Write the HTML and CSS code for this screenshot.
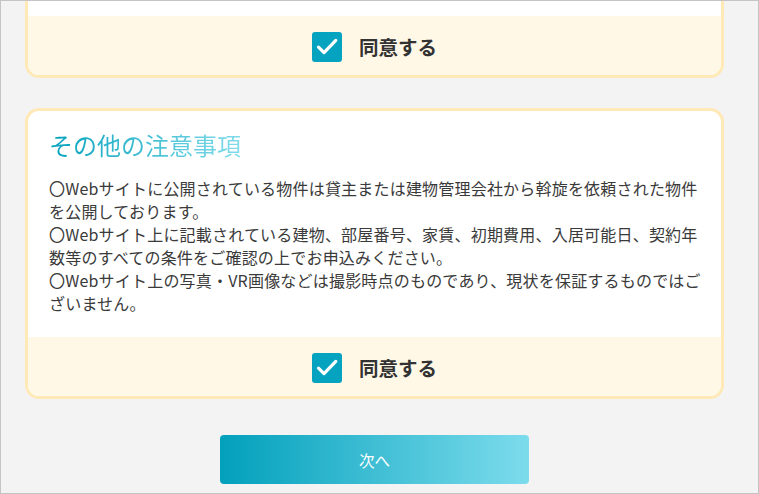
FILE: index.html
```html
<!DOCTYPE html>
<html lang="ja">

<head>
    <meta charset="UTF-8">
    <meta name="viewport" content="width=device-width, initial-scale=1.0">
    <title>注意事項の確認</title>
    <link rel="stylesheet" href="styles.css">
</head>

<body>

    <div class="frame">
        <div class="content">

            <section class="card card-first">
                <div class="card-body card-body-cut"></div>
                <label class="agree">
                    <span class="check">
                        <svg width="30" height="30" viewBox="0 0 30 30">
                            <rect width="30" height="30" rx="3" fill="#05a3bf" />
                            <path d="M6.5 15.2 L12 20.6 L23.8 8.4" fill="none" stroke="#fff" stroke-width="3.2" stroke-linecap="round" stroke-linejoin="round" />
                        </svg>
                    </span>
                    <span class="agree-text">同意する</span>
                </label>
            </section>

            <section class="card">
                <div class="card-body">
                    <h2 class="card-title"><span>その他の注意事項</span></h2>
                    <p class="notes">〇Webサイトに公開されている物件は貸主または建物管理会社から斡旋を依頼された物件を公開しております。<br>〇Webサイト上に記載されている建物、部屋番号、家賃、初期費用、入居可能日、契約年数等のすべての条件をご確認の上でお申込みください。<br>〇Webサイト上の写真・VR画像などは撮影時点のものであり、現状を保証するものではございません。</p>
                </div>
                <label class="agree">
                    <span class="check">
                        <svg width="30" height="30" viewBox="0 0 30 30">
                            <rect width="30" height="30" rx="3" fill="#05a3bf" />
                            <path d="M6.5 15.2 L12 20.6 L23.8 8.4" fill="none" stroke="#fff" stroke-width="3.2" stroke-linecap="round" stroke-linejoin="round" />
                        </svg>
                    </span>
                    <span class="agree-text">同意する</span>
                </label>
            </section>

            <div class="actions">
                <button class="next" type="button">次へ</button>
            </div>

        </div>
    </div>

</body>

</html>
```

FILE: styles.css
```css
body {
    margin: 0;
    font-family: "Noto Sans CJK JP", "Noto Sans", sans-serif;
    color: #333333;
}

.frame {
    width: 759px;
    height: 494px;
    box-sizing: border-box;
    border: 1px solid #c4c4c4;
    background-color: #f3f3f3;
    overflow: hidden;
}

.content {
    padding: 0 34px 0 24px;
}

.card {
    background-color: #ffffff;
    border: 3px solid #ffe9b6;
    border-radius: 14px;
    overflow: hidden;
    margin-top: 30px;
}

.card-first {
    margin-top: -28px;
}

.card-body {
    padding: 18px 17px 22px 21px;
}

.card-body-cut {
    height: 40px;
    padding: 0;
}

.card-title {
    margin: 0 0 16px;
    font-size: 24px;
    font-weight: 400;
    line-height: 32px;
}

.card-title span {
    display: inline-block;
    background: linear-gradient(90deg, #05a2bd 0%, #82dcea 100%);
    -webkit-background-clip: text;
    background-clip: text;
    color: transparent;
}

.notes {
    margin: 0;
    font-size: 16px;
    line-height: 23px;
    letter-spacing: 0.2px;
    color: #3a3a3a;
}

.agree {
    display: flex;
    justify-content: center;
    align-items: center;
    gap: 17px;
    padding: 16px 0 13px;
    background-color: #fff8e6;
}

.check {
    display: flex;
    width: 30px;
    height: 30px;
}

.agree-text {
    font-size: 19.5px;
    font-weight: 700;
    line-height: 30px;
    color: #333333;
}

.actions {
    display: flex;
    justify-content: center;
    margin-top: 36px;
}

.next {
    width: 309px;
    height: 49px;
    border: none;
    border-radius: 4px;
    background: linear-gradient(90deg, #02a0bc 0%, #7cdcec 100%);
    color: #ffffff;
    font-family: "Noto Sans CJK JP", sans-serif;
    font-size: 15.5px;
    cursor: pointer;
}
```
